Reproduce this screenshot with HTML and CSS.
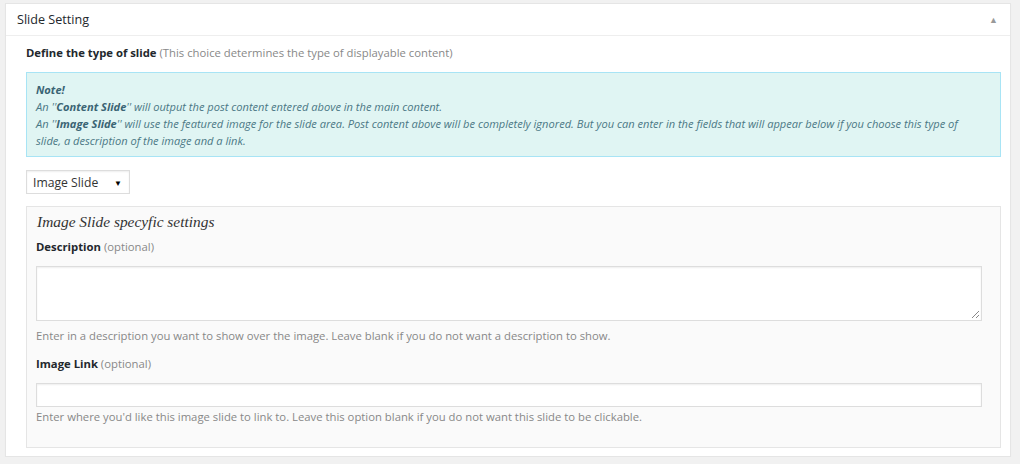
FILE: index.html
```html
<!DOCTYPE html>
<html>
<head>
<meta charset="utf-8">
<link rel="stylesheet" href="styles.css">
</head>
<body>
<div class="postbox">
  <div class="hndle">
    <span>Slide Setting</span>
    <span class="toggle">&#9650;</span>
  </div>
  <div class="inside">
    <p class="define"><strong>Define the type of slide</strong> <span class="muted">(This choice determines the type of displayable content)</span></p>
    <div class="note">
      <strong>Note!</strong><br>
      An ''<strong>Content Slide</strong>'' will output the post content entered above in the main content.<br>
      An ''<strong>Image Slide</strong>'' will use the featured image for the slide area. Post content above will be completely ignored. But you can enter in the fields that will appear below if you choose this type of slide, a description of the image and a link.
    </div>
    <div class="select">
      <span>Image Slide</span>
      <span class="caret">&#9660;</span>
    </div>
    <div class="specific">
      <h3 class="spec-title">Image Slide specyfic settings</h3>
      <label class="lbl"><strong>Description</strong> <span class="muted">(optional)</span></label>
      <div class="textarea">
        <svg class="grip" width="9" height="9" viewBox="0 0 9 9"><path d="M8 1 L1 8 M8 5 L5 8" stroke="#888" stroke-width="1" fill="none"/></svg>
      </div>
      <p class="help">Enter in a description you want to show over the image. Leave blank if you do not want a description to show.</p>
      <label class="lbl lbl2"><strong>Image Link</strong> <span class="muted">(optional)</span></label>
      <div class="input"></div>
      <p class="help help2">Enter where you'd like this image slide to link to. Leave this option blank if you do not want this slide to be clickable.</p>
    </div>
  </div>
</div>
</body>
</html>
```
FILE: styles.css
```css
html, body {
  margin: 0;
  padding: 0;
  background: #f1f1f1;
  font-family: "Open Sans", "Liberation Sans", sans-serif;
  color: #444;
}
body {
  padding: 3px 9px 0 5px;
}
.postbox {
  background: #fff;
  border: 1px solid #e5e5e5;
  box-shadow: 0 1px 1px rgba(0,0,0,0.04);
  height: 454px;
  box-sizing: border-box;
}
.hndle {
  height: 31px;
  border-bottom: 1px solid #eee;
  display: flex;
  align-items: center;
  justify-content: space-between;
  padding: 0 12px 0 11px;
  font-size: 12.6px;
  color: #23282d;
}
.hndle .toggle {
  font-size: 9px;
  color: #999;
  margin-top: -1px;
}
.inside {
  padding: 0 9px 0 20px;
}
.define {
  margin: 8px 0 0;
  font-size: 11.3px;
  line-height: 18px;
  color: #333;
}
.define strong { color: #23282d; }
.muted { color: #888; }
.note {
  margin-top: 10px;
  background: #e0f5f3;
  border: 1px solid #a8e4f5;
  padding: 8px 24px 7px 9px;
  font-size: 11.1px;
  font-style: italic;
  line-height: 17px;
  color: #4b7885;
}
.note strong { color: #3a6473; }
.select {
  margin-top: 13px;
  width: 104px;
  height: 24px;
  box-sizing: border-box;
  border: 1px solid #ddd;
  box-shadow: inset 0 1px 2px rgba(0,0,0,0.07);
  display: flex;
  align-items: center;
  justify-content: space-between;
  padding: 0 7px 0 6px;
  font-size: 12.2px;
  color: #333;
}
.caret {
  font-size: 8px;
  color: #000;
}
.specific {
  margin-top: 12px;
  background: #fafafa;
  border: 1px solid #e5e5e5;
  height: 242px;
  box-sizing: border-box;
  padding: 0 18px 0 9px;
}
.spec-title {
  margin: 6px 0 0 1px;
  font-family: "Liberation Serif", "DejaVu Serif", serif;
  font-style: italic;
  font-weight: normal;
  font-size: 15.4px;
  line-height: 18px;
  color: #333;
}
.lbl {
  display: block;
  margin-top: 7px;
  font-size: 11.3px;
  line-height: 18px;
  color: #333;
}
.lbl2 { margin-top: 10px; }
.lbl strong { color: #23282d; }
.textarea {
  position: relative;
  margin-top: 10px;
  height: 55px;
  background: #fff;
  border: 1px solid #ddd;
  box-sizing: border-box;
  box-shadow: inset 0 1px 2px rgba(0,0,0,0.07);
}
.grip {
  position: absolute;
  right: 1px;
  bottom: 1px;
}
.help {
  margin: 6px 0 0;
  font-size: 11.3px;
  line-height: 18px;
  color: #888;
}
.input {
  margin-top: 10px;
  height: 24px;
  background: #fff;
  border: 1px solid #ddd;
  box-sizing: border-box;
  box-shadow: inset 0 1px 2px rgba(0,0,0,0.07);
}
.help2 { margin-top: 1px; }
```
